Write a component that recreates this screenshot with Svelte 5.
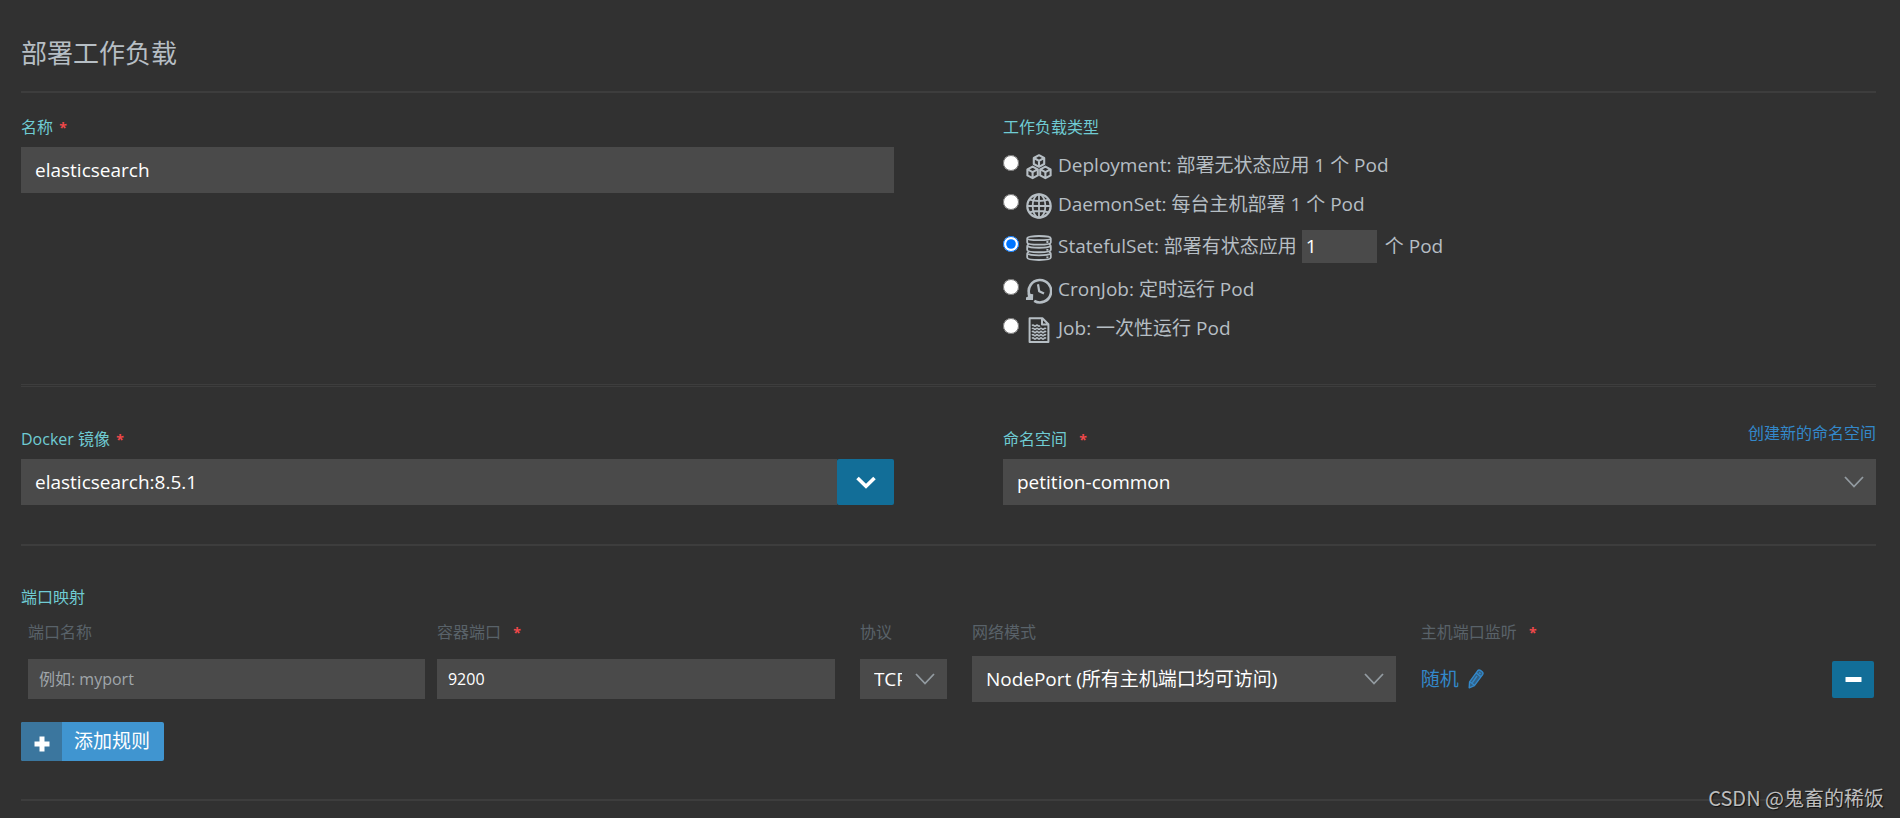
<script>
  let name = $state('elasticsearch');
  let image = $state('elasticsearch:8.5.1');
  let replicas = $state('1');
  let kind = $state('statefulset');
  let rows = $state([{ name: '', port: '9200' }]);

  const kinds = [
    { id: 'deployment', label: 'Deployment: 部署无状态应用 1 个 Pod' },
    { id: 'daemonset', label: 'DaemonSet: 每台主机部署 1 个 Pod' },
    { id: 'statefulset', label: 'StatefulSet: 部署有状态应用', after: '个 Pod' },
    { id: 'cronjob', label: 'CronJob: 定时运行 Pod' },
    { id: 'job', label: 'Job: 一次性运行 Pod' }
  ];
</script>

{#snippet chevron()}
  <svg class="chevron" viewBox="0 0 20 12" aria-hidden="true">
    <path d="M1 1 L10 10.5 L19 1" fill="none" stroke="currentColor" stroke-width="1.8" />
  </svg>
{/snippet}

{#snippet cube(x, y)}
  <path d="M{x} {y - 5.8} l5.2 2.8 v6 l-5.2 2.8 l-5.2 -2.8 v-6 z M{x - 5} {y - 3} l5 2.8 l5 -2.8 M{x} {y} v5.8" />
{/snippet}

{#snippet kindIcon(id)}
  <svg class="kind-icon" viewBox="0 0 26 26" fill="none" stroke="currentColor" stroke-linejoin="round" aria-hidden="true">
    {#if id === 'deployment'}
      <g stroke-width="2.1">
        {@render cube(13, 7)}
        {@render cube(6.6, 18.4)}
        {@render cube(19.4, 18.4)}
      </g>
    {:else if id === 'daemonset'}
      <circle cx="13" cy="13" r="11.7" stroke-width="2.2" />
      <g stroke-width="1.8">
        <ellipse cx="13" cy="13" rx="6.4" ry="11.7" />
        <path d="M13 1 V25 M1 13 H25 M3.4 6.6 Q13 9.4 22.6 6.6 M3.4 19.4 Q13 16.6 22.6 19.4" />
      </g>
    {:else if id === 'statefulset'}
      <g stroke-width="1.8">
        <path d="M1.2 3.4 C1.2 0.2 24.8 0.2 24.8 3.4 C24.8 5.6 1.2 5.6 1.2 3.4 V7.4 C1.2 10.4 24.8 10.4 24.8 7.4 V3.4" />
        <path d="M3 9.4 C0.8 10.2 1.2 10.8 1.2 15 C1.2 18 24.8 18 24.8 15 C24.8 10.8 25.2 10.2 23 9.4 M1.4 10.8 C4 13.4 22 13.4 24.6 10.8" />
        <path d="M3 17 C0.8 17.8 1.2 18.4 1.2 22.6 C1.2 25.8 24.8 25.8 24.8 22.6 C24.8 18.4 25.2 17.8 23 17 M1.4 18.4 C4 21 22 21 24.6 18.4" />
        <path d="M20.4 7 h2 M20.4 14.8 h2 M20.4 22.4 h2" />
      </g>
    {:else if id === 'cronjob'}
      <path d="M3.4 17 A11.2 11.2 0 1 1 8.2 22.8" stroke-width="2.6" />
      <path d="M1.4 15.4 L7.2 16.2 L7 22 L0 22 L0 19.6 L2 18.4 z" fill="currentColor" stroke="none" />
      <path d="M12 6.2 L13.2 13.2 L18 15.6" stroke-width="2.2" />
    {:else}
      <path d="M3.6 1.2 H16.4 L22.4 7.2 V25 H3.6 z M16 1.6 V7.6 H22" stroke-width="2" />
      <path d="M6 8.6 q1 -1 2 0 t2 0 t2 0 t2 0 M6 11.8 q1 -1.2 2 0 t2 0 t2 0 t2 0 t2 0 t2 0 t2 0 M6 15 q1 -1.2 2 0 t2 0 t2 0 t2 0 t2 0 t2 0 t2 0 M6 18.2 q1 -1.2 2 0 t2 0 t2 0 t2 0 t2 0 t2 0 t2 0 M6 21.4 q1 -1.2 2 0 t2 0 t2 0 t2 0 t2 0 t2 0 t2 0" stroke-width="1.6" />
    {/if}
  </svg>
{/snippet}

<main class="page">
  <h1>部署工作负载</h1>

  <section class="columns basics">
    <div class="field">
      <label class="caption" for="name">名称 <span class="required">*</span></label>
      <input id="name" class="control" type="text" bind:value={name} />
    </div>

    <fieldset class="kinds">
      <legend class="caption">工作负载类型</legend>
      {#each kinds as item (item.id)}
        <div class="kind" class:tall={item.after}>
          <input type="radio" id={item.id} name="kind" value={item.id} bind:group={kind} />
          <label for={item.id}>
            {@render kindIcon(item.id)}
            <span>{item.label}</span>
          </label>
          {#if item.after}
            <input class="replicas" type="text" aria-label="Pod" bind:value={replicas} />
            <span>{item.after}</span>
          {/if}
        </div>
      {/each}
    </fieldset>
  </section>

  <section class="columns source">
    <div class="field">
      <label class="caption" for="image">Docker 镜像 <span class="required">*</span></label>
      <div class="combo">
        <input id="image" class="control" type="text" bind:value={image} />
        <button class="primary combo-toggle" type="button" aria-label="Docker 镜像">
          <svg viewBox="0 0 20 13" aria-hidden="true">
            <path d="M1.5 2 L10 10.2 L18.5 2" fill="none" stroke="currentColor" stroke-width="3.6" />
          </svg>
        </button>
      </div>
    </div>

    <div class="field">
      <div class="caption-row">
        <label class="caption" for="namespace">命名空间 <span class="required spaced">*</span></label>
        <a class="create" href="#namespace">创建新的命名空间</a>
      </div>
      <div class="select">
        <select id="namespace" class="control">
          <option>petition-common</option>
        </select>
        {@render chevron()}
      </div>
    </div>
  </section>

  <section class="ports">
    <h2 class="caption">端口映射</h2>
    <table>
      <colgroup>
        <col class="c-name" />
        <col class="c-port" />
        <col class="c-protocol" />
        <col class="c-mode" />
        <col />
        <col class="c-remove" />
      </colgroup>
      <thead>
        <tr>
          <th>端口名称</th>
          <th>容器端口 <span class="required spaced">*</span></th>
          <th class="inset">协议</th>
          <th class="inset">网络模式</th>
          <th class="inset">主机端口监听 <span class="required spaced">*</span></th>
          <td></td>
        </tr>
      </thead>
      <tbody>
        {#each rows as row, i}
          <tr>
            <td><input class="control small" type="text" aria-label="端口名称" placeholder="例如: myport" bind:value={row.name} /></td>
            <td><input class="control small" type="text" aria-label="容器端口" bind:value={row.port} /></td>
            <td class="inset">
              <div class="select compact">
                <select class="control" aria-label="协议">
                  <option>TCP</option>
                  <option>UDP</option>
                </select>
                {@render chevron()}
              </div>
            </td>
            <td class="inset">
              <div class="select">
                <select class="control" aria-label="网络模式">
                  <option>NodePort (所有主机端口均可访问)</option>
                </select>
                {@render chevron()}
              </div>
            </td>
            <td class="inset">
              <a class="random" href="#port">
                随机
                <svg viewBox="0 0 16 20" aria-hidden="true">
                  <path d="M1.6 12.8 L9.6 1.8 Q10.8 0.4 12.4 1.4 L14.2 2.8 Q15.6 4 14.6 5.6 L6.4 16.6 L1.2 18.8 z" fill="currentColor" fill-opacity="0.55" stroke="currentColor" stroke-width="1.4" stroke-linejoin="round" />
                  <path d="M8.2 4 L12.8 7.6 M11 3.6 l1.6 1.2 M2.2 13 L6.4 16.2 M9 7 L4.4 13.6" fill="none" stroke="currentColor" stroke-width="1.4" />
                </svg>
              </a>
            </td>
            <td class="remove-cell">
              <button class="primary remove" type="button" aria-label="-" onclick={() => rows.splice(i, 1)}>
                <svg viewBox="0 0 16 6" aria-hidden="true"><rect width="16" height="5" y="1" rx="0.6" fill="currentColor" /></svg>
              </button>
            </td>
          </tr>
        {/each}
      </tbody>
    </table>

    <button class="add" type="button" onclick={() => rows.push({ name: '', port: '' })}>
      <span class="add-icon">
        <svg viewBox="0 0 16 16" aria-hidden="true"><path d="M5.5 0.5 h5 v5 h5 v5 h-5 v5 h-5 v-5 h-5 v-5 h5 z" fill="currentColor" /></svg>
      </span>
      <span class="add-text">添加规则</span>
    </button>
  </section>

  <div class="watermark">CSDN @鬼畜的稀饭</div>
</main>

<style>
  :global(body) {
    background: #313131;
  }

  .page,
  .page * {
    box-sizing: border-box;
  }

  .page {
    position: relative;
    min-height: 100vh;
    padding: 0 24px 16px 21px;
    color: #b6bec4;
    font-family: 'Open Sans', 'Noto Sans CJK SC', sans-serif;
    font-size: 19px;
    font-weight: 400;
    line-height: 26px;
  }

  input,
  select,
  button {
    margin: 0;
    border: 0;
    border-radius: 0;
    font: inherit;
  }

  a {
    color: #3388ca;
    text-decoration: none;
  }

  h1 {
    margin: 0;
    padding: 33px 0 18px;
    border-bottom: 2px solid #3d3d3d;
    font-size: 26px;
    font-weight: 400;
    line-height: 40px;
  }

  .columns {
    display: grid;
    grid-template-columns: 1fr 1fr;
    column-gap: 109px;
    border-bottom: 2px solid #3d3d3d;
  }

  .basics {
    padding: 22px 0 37px;
    border-bottom: 3px double #3d3d3d;
  }

  .source {
    padding: 40px 0 39px;
  }

  .caption {
    display: block;
    margin: 0;
    padding: 0;
    color: #6fcbd3;
    font-size: 16px;
    font-weight: 400;
    line-height: 24px;
  }

  .field .caption {
    margin-bottom: 8px;
  }

  .caption-row {
    display: flex;
    justify-content: space-between;
  }

  .create {
    font-size: 16px;
    line-height: 12px;
  }

  .required {
    margin-left: 2px;
    color: #f0484a;
    font-size: 14px;
    font-weight: 700;
    line-height: 14px;
  }

  .spaced {
    margin-left: 8px;
  }

  .control {
    display: block;
    width: 100%;
    height: 46px;
    padding: 0 14px;
    background: #4a4a4a;
    color: #fff;
    outline: 0;
  }

  .small {
    height: 40px;
    padding: 0 11px;
    font-size: 16px;
  }

  .small::placeholder {
    color: #a0a6aa;
    opacity: 1;
  }

  .select {
    position: relative;
    color: #939ba1;
  }

  select.control {
    appearance: none;
    padding-right: 45px;
  }

  .compact .control {
    height: 40px;
  }

  .chevron {
    position: absolute;
    top: 50%;
    right: 12px;
    width: 20px;
    height: 12px;
    transform: translateY(-50%);
    pointer-events: none;
  }

  .combo {
    display: flex;
  }

  .primary {
    display: flex;
    align-items: center;
    justify-content: center;
    border-radius: 2px;
    background: #126e98;
    color: #fff;
  }

  .combo-toggle {
    flex: none;
    width: 57px;
  }

  .combo-toggle svg {
    width: 20px;
    height: 13px;
  }

  .kinds {
    min-width: 0;
    margin: 0;
    padding: 6px 0 0;
    border: 0;
  }

  .kind {
    display: flex;
    align-items: center;
    height: 39px;
  }

  .tall {
    height: 46px;
  }

  .kind label {
    display: flex;
    align-items: center;
    gap: 6px;
  }

  .kind input[type='radio'] {
    width: 16px;
    height: 16px;
    margin: 0 7px 4px 0;
  }

  .kind-icon {
    width: 26px;
    height: 26px;
    margin-top: 4px;
  }

  .replicas {
    width: 75px;
    height: 33px;
    margin: 0 8px 0 5px;
    padding: 0 4px;
    background: #4a4a4a;
    color: #fff;
  }

  .ports {
    padding: 39px 0 38px;
    border-bottom: 2px solid #3d3d3d;
  }

  table {
    width: 100%;
    border-collapse: collapse;
    table-layout: fixed;
  }

  .c-name,
  .c-port {
    width: 22.1%;
  }

  .c-protocol {
    width: 112px;
  }

  .c-mode {
    width: 24.2%;
  }

  .c-remove {
    width: 50px;
  }

  th,
  td {
    padding: 0 6px;
    text-align: left;
  }

  th {
    height: 47px;
    padding-bottom: 2px;
    color: #596269;
    font-size: 16px;
    font-weight: 400;
  }

  th:first-child,
  td:first-child {
    padding-left: 7px;
  }

  th.inset,
  td.inset {
    padding-left: 19px;
  }

  .random {
    display: inline-flex;
    align-items: center;
    gap: 9px;
  }

  .random svg {
    width: 16px;
    height: 20px;
  }

  .remove-cell {
    padding: 0 2px 0 6px;
  }

  .remove {
    width: 42px;
    height: 37px;
    padding: 0;
  }

  .remove svg {
    width: 17px;
    height: 6px;
  }

  .add {
    display: flex;
    height: 39px;
    margin-top: 20px;
    padding: 0;
    overflow: hidden;
    border-radius: 2px;
    background: #4095d0;
    color: #fff;
  }

  .add-icon {
    display: flex;
    align-items: center;
    justify-content: center;
    width: 41px;
    height: 100%;
    padding-top: 4px;
    background: #3b769e;
  }

  .add-icon svg {
    width: 16px;
    height: 16px;
  }

  .add-text {
    padding: 0 14px 0 12px;
    line-height: 39px;
  }

  .watermark {
    position: absolute;
    right: 16px;
    bottom: 6px;
    color: #bdbdbd;
    font-family: 'Noto Sans CJK SC', sans-serif;
    font-size: 20px;
    font-weight: 400;
    line-height: 28px;
    text-shadow: 1px 1px 1px #111;
  }
</style>
